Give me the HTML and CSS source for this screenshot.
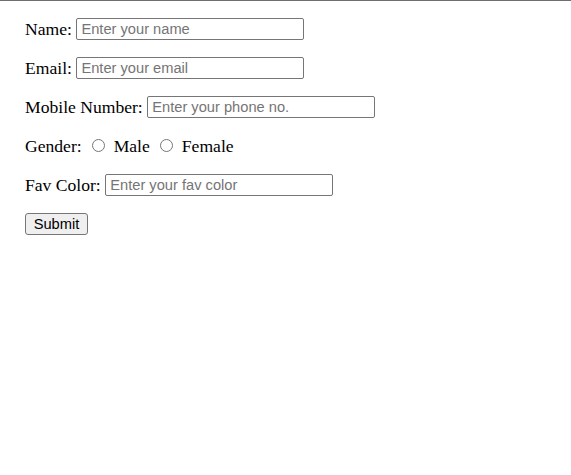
FILE: index.html
```html
<!DOCTYPE html>
<html>
<head>
<meta charset="utf-8">
<link rel="stylesheet" href="styles.css">
</head>
<body>
<div class="frame">
  <form class="form">
    <div class="row"><label for="name">Name:</label><input class="field" id="name" type="text" placeholder="Enter your name"></div>
    <div class="row"><label for="email">Email:</label><input class="field" id="email" type="text" placeholder="Enter your email"></div>
    <div class="row"><label for="phone">Mobile Number:</label><input class="field" id="phone" type="text" placeholder="Enter your phone no."></div>
    <div class="row"><span class="label">Gender:</span><input class="radio" type="radio" name="g" id="m"><label for="m">Male</label><input class="radio" type="radio" name="g" id="f"><label for="f">Female</label></div>
    <div class="row"><label for="color">Fav Color:</label><input class="field" id="color" type="text" placeholder="Enter your fav color"></div>
    <div class="row"><button class="submit" type="button">Submit</button></div>
  </form>
</div>
</body>
</html>
```
FILE: styles.css
```css
html, body {
  margin: 0;
  padding: 0;
  background: #ffffff;
}
.frame {
  border-top: 1px solid #6e6e6e;
  min-height: 474px;
}
.form {
  display: flex;
  flex-direction: column;
  gap: 17px;
  padding: 17px 0 0 25px;
  font-family: "Liberation Serif", "Times New Roman", serif;
  font-size: 17.6px;
  color: #000;
}
.row {
  display: flex;
  align-items: center;
  gap: 4.5px;
  height: 22px;
}
.field {
  box-sizing: border-box;
  width: 228px;
  height: 22px;
  margin: 0;
  padding: 1px 4px;
  border: 1px solid #767676;
  border-radius: 2px;
  font-family: "Liberation Sans", Arial, sans-serif;
  font-size: 14.67px;
  color: #000;
  background: #fff;
}
.field::placeholder {
  color: #757575;
}
.radio {
  width: 13px;
  height: 13px;
  margin: 0 4.5px 2px 5.5px;
}
.submit {
  box-sizing: border-box;
  width: 63px;
  height: 22px;
  margin: 0;
  padding: 0;
  border: 1px solid #767676;
  border-radius: 3px;
  background: #efefef;
  font-family: "Liberation Sans", Arial, sans-serif;
  font-size: 14.67px;
  color: #000;
}
```
